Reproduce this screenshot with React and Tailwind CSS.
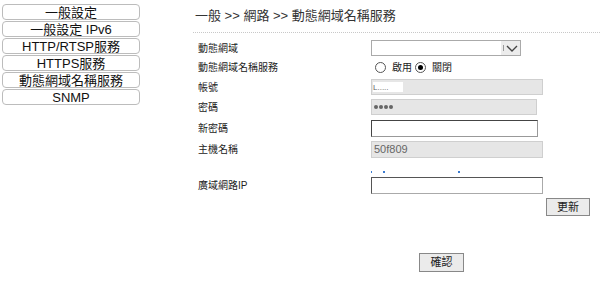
import React from "react";

const menu = ["一般設定", "一般設定 IPv6", "HTTP/RTSP服務", "HTTPS服務", "動態網域名稱服務", "SNMP"];

function Label({ children }) {
  return <div className="w-[178px] pl-[5px] text-[10px] text-[#222]">{children}</div>;
}

function Radio({ checked }) {
  return (
    <span className="w-[11px] h-[11px] rounded-full border border-[#555] bg-white flex items-center justify-center">
      {checked && <span className="w-[5px] h-[5px] rounded-full bg-black"></span>}
    </span>
  );
}

function App() {
  return (
    <div
      className="flex w-[600px] h-[285px] bg-white overflow-hidden"
      style={{ fontFamily: '"Liberation Sans", "Noto Sans CJK TC", sans-serif' }}
    >
      <div className="w-[193px] pl-[2px] pt-[4px] flex flex-col gap-[1px]">
        {menu.map((m) => (
          <div
            key={m}
            className="w-[138px] h-[16px] rounded-[4px] border border-[#bcbcbc] bg-white flex items-center justify-center text-[13px] leading-none text-[#111]"
          >
            {m}
          </div>
        ))}
      </div>

      <div className="flex-1 flex flex-col">
        <div className="h-[33px] pt-[8px] pl-[2px] border-b border-dotted border-[#c8c8c8] text-[13px] leading-[16px] text-[#333]">
          一般 &gt;&gt; 網路 &gt;&gt; 動態網域名稱服務
        </div>

        <div className="flex items-center mt-[7px] h-[16px]">
          <Label>動態網域</Label>
          <div className="w-[150px] h-[16px] border border-[#aaa] bg-white flex justify-end">
            <div className="w-[19px] h-full bg-[#ececec] flex items-center justify-center gap-[2px]">
              <span className="w-[1px] h-[6px] bg-[#999]"></span>
              <svg width="12" height="9" viewBox="0 0 12 9">
                <path d="M1 2 L6 7 L11 2" stroke="#444" strokeWidth="1.4" fill="none" />
              </svg>
            </div>
          </div>
        </div>

        <div className="flex items-center mt-[3px] h-[17px]">
          <Label>動態網域名稱服務</Label>
          <div className="flex items-center pl-[4px] text-[10px] text-[#222]">
            <Radio />
            <span className="ml-[6px] mr-[3px]">啟用</span>
            <Radio checked />
            <span className="ml-[6px]">關閉</span>
          </div>
        </div>

        <div className="flex items-center mt-[3px] h-[16px]">
          <Label>帳號</Label>
          <div className="w-[172px] h-[16px] border border-[#cfcfcf] bg-[#e6e6e6] flex items-center">
            <span className="ml-[1px] w-[30px] h-[10px] bg-white flex items-end text-[8px] leading-none text-[#666]">
              L.....
            </span>
          </div>
        </div>

        <div className="flex items-center mt-[4px] h-[16px]">
          <Label>密碼</Label>
          <div className="w-[166px] h-[16px] border border-[#cfcfcf] bg-[#e6e6e6] flex items-center pl-[2px] gap-[1px]">
            {[0, 1, 2, 3].map((i) => (
              <span key={i} className="w-[4px] h-[4px] rounded-full bg-[#666]"></span>
            ))}
          </div>
        </div>

        <div className="flex items-center mt-[5px] h-[17px]">
          <Label>新密碼</Label>
          <div className="w-[167px] h-[17px] border border-[#444] border-r-[#999] border-b-[#999] bg-white"></div>
        </div>

        <div className="flex items-center mt-[4px] h-[17px]">
          <Label>主機名稱</Label>
          <div className="w-[172px] h-[17px] border border-[#cfcfcf] bg-[#e6e6e6] flex items-center pl-[2px] text-[11px] text-[#666]">
            50f809
          </div>
        </div>

        <div className="flex items-center mt-[13px] h-[2px] pl-[178px]">
          <span className="w-[1px] h-[2px] bg-[#3b7bd0]"></span>
          <span className="ml-[11px] w-[2px] h-[2px] bg-[#3b7bd0]"></span>
          <span className="ml-[73px] w-[2px] h-[2px] bg-[#3b7bd0]"></span>
        </div>

        <div className="flex items-center mt-[4px] h-[17px]">
          <Label>廣域網路IP</Label>
          <div className="w-[172px] h-[17px] border border-[#555] border-r-[#aaa] border-b-[#aaa] bg-white"></div>
        </div>

        <div className="flex justify-end mt-[4px] pr-[10px]">
          <div className="w-[44px] h-[18px] border border-[#888] bg-[#ebebeb] flex items-center justify-center text-[11px] text-[#222]">
            更新
          </div>
        </div>

        <div className="flex mt-[37px] pl-[226px]">
          <div className="w-[45px] h-[19px] border border-[#888] bg-[#ebebeb] flex items-center justify-center text-[11px] text-[#222]">
            確認
          </div>
        </div>
      </div>
    </div>
  );
}

export default App;
